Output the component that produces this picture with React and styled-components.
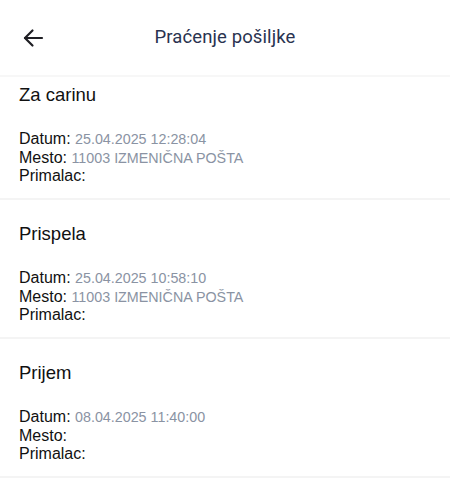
import React from 'react';
import styled, { createGlobalStyle } from 'styled-components';

const GlobalStyle = createGlobalStyle`
  html, body {
    margin: 0;
    padding: 0;
    background: #ffffff;
  }
  body {
    font-family: "Liberation Sans", Arial, sans-serif;
  }
`;

const Screen = styled.div`
  width: 450px;
  height: 486px;
  overflow: hidden;
  display: flex;
  flex-direction: column;
  background: #ffffff;
`;

const Header = styled.header`
  position: relative;
  z-index: 1;
  flex: 0 0 auto;
  height: 75px;
  display: flex;
  align-items: center;
  justify-content: center;
  background: #ffffff;
  border-bottom: 2px solid #f7f7f7;
`;

const BackButton = styled.button`
  position: absolute;
  left: 18px;
  top: 24px;
  width: 30px;
  height: 28px;
  padding: 0;
  border: 0;
  background: none;
  display: flex;
  align-items: center;
  justify-content: center;
  color: #1f1f24;
`;

const Title = styled.h1`
  margin: 0 0 2px;
  font-family: Roboto, "Noto Sans", sans-serif;
  font-weight: 400;
  font-size: 18.5px;
  color: #2a3350;
  letter-spacing: 0.1px;
`;

const Scroll = styled.div`
  flex: 1 1 auto;
  overflow: hidden;
`;

const List = styled.ul`
  list-style: none;
  margin: -16px 0 0;
  padding: 0;
`;

const Item = styled.li`
  height: 139px;
  box-sizing: border-box;
  padding: 23px 19px 0;
  border-bottom: 2px solid #f4f4f4;
`;

const Status = styled.h2`
  margin: 0 0 24px;
  font-size: 18.5px;
  line-height: 22px;
  font-weight: 400;
  color: #111111;
`;

const Line = styled.div`
  font-size: 16px;
  line-height: 18.5px;
  color: #111111;
`;

const Value = styled.span`
  font-size: 14.3px;
  color: #8a93a3;
`;

const events = [
  { status: 'Za carinu', datum: '25.04.2025 12:28:04', mesto: '11003 IZMENIČNA POŠTA' },
  { status: 'Prispela', datum: '25.04.2025 10:58:10', mesto: '11003 IZMENIČNA POŠTA' },
  { status: 'Prijem', datum: '08.04.2025 11:40:00', mesto: '' },
];

export default function App() {
  return (
    <>
      <GlobalStyle />
      <Screen>
        <Header>
          <BackButton aria-label="Nazad">
            <svg width="22" height="20" viewBox="0 0 22 20" fill="none" stroke="currentColor" strokeWidth="2.2" strokeLinecap="round" strokeLinejoin="round">
              <path d="M20 10H3" />
              <path d="M10.5 2.5L3 10l7.5 7.5" />
            </svg>
          </BackButton>
          <Title>Praćenje pošiljke</Title>
        </Header>
        <Scroll>
          <List>
            {events.map((e) => (
              <Item key={e.status}>
                <Status>{e.status}</Status>
                <Line>Datum: <Value>{e.datum}</Value></Line>
                <Line>Mesto: <Value>{e.mesto}</Value></Line>
                <Line>Primalac: </Line>
              </Item>
            ))}
          </List>
        </Scroll>
      </Screen>
    </>
  );
}
